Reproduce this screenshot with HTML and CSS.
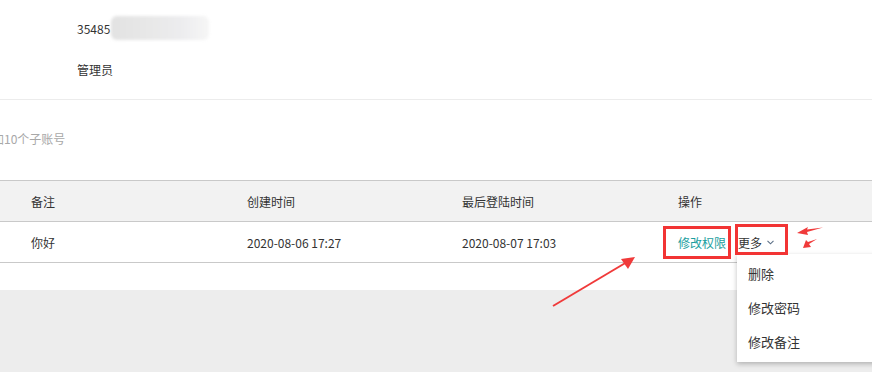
FILE: index.html
```html
<!DOCTYPE html>
<html lang="zh-CN">
<head>
    <meta charset="UTF-8">
    <meta name="viewport" content="width=device-width, initial-scale=1.0">
    <title>子账号管理</title>
    <link rel="stylesheet" href="styles.css">
</head>
<body>
    <div id="page">
        <div class="info">
            <div class="info-row">
                <span>35485</span>
                <span class="blur"></span>
            </div>
            <div class="info-row">管理员</div>
        </div>
        <div class="tip"><span>可添加10个子账号</span></div>
        <table class="sub-table">
            <thead>
                <tr>
                    <th>备注</th>
                    <th>创建时间</th>
                    <th>最后登陆时间</th>
                    <th>操作</th>
                </tr>
            </thead>
            <tbody>
                <tr>
                    <td>你好</td>
                    <td>2020-08-06 17:27</td>
                    <td>2020-08-07 17:03</td>
                    <td>
                        <div class="ops">
                            <a class="op-edit">修改权限</a>
                            <div class="more">
                                <a class="op-more">更多<svg class="caret" width="7" height="5" viewBox="0 0 7 5"><path d="M0.5 0.8 L3.5 3.8 L6.5 0.8" fill="none" stroke="#5b6f86" stroke-width="1.1"/></svg></a>
                                <ul class="menu">
                                    <li>删除</li>
                                    <li>修改密码</li>
                                    <li>修改备注</li>
                                </ul>
                            </div>
                        </div>
                    </td>
                </tr>
            </tbody>
        </table>
        <div class="gap"></div>
        <div class="footer-area"></div>

        <!-- annotations -->
        <div class="mark mark1"></div>
        <div class="mark mark2"></div>
        <svg class="arrows" width="872" height="372" viewBox="0 0 872 372">
            <line x1="553" y1="306" x2="627" y2="262" stroke="#f03a3a" stroke-width="2"/>
            <polygon points="635,257 621,259 628,269" fill="#f03a3a"/>
            <polygon points="797,233 808,227 807,229.5 823,227.5 807,232 808,235" fill="#f03a3a"/>
            <polygon points="803,248 806,240 808,242 817,239 809,244 811,247" fill="#f03a3a"/>
        </svg>
    </div>
</body>
</html>
```

FILE: styles.css
```css
body {
    margin: 0;
    font-family: "Noto Sans CJK SC", "Noto Sans", sans-serif;
    font-size: 12px;
    color: #333;
    background-color: #fff;
}
#page {
    position: relative;
    width: 872px;
    height: 372px;
    overflow: hidden;
}
.info {
    height: 100px;
    box-sizing: border-box;
    padding: 17px 0 0 77px;
    border-bottom: 1px solid #ececec;
}
.info-row {
    display: flex;
    align-items: center;
    height: 22px;
    margin-bottom: 19px;
}
.blur {
    width: 98px;
    height: 24px;
    margin-left: 1px;
    background: linear-gradient(90deg, #e2e2e2, #e8e8e8 40%, #ececee 70%, #f6f6f6);
    border-radius: 6px;
    filter: blur(1.5px);
}
.tip {
    height: 80px;
    line-height: 78px;
    color: #a8a8a8;
    white-space: nowrap;
}
.tip span {
    display: inline-block;
    margin-left: -32px;
}
.sub-table {
    width: 100%;
    border-collapse: collapse;
    table-layout: fixed;
}
.sub-table th,
.sub-table td {
    height: 40px;
    padding: 0 0 0 31px;
    text-align: left;
    font-weight: normal;
    border-top: 1px solid #c9c9c9;
    border-bottom: 1px solid #c9c9c9;
}
.sub-table th {
    background-color: #f2f2f2;
}
.sub-table th:nth-child(1), .sub-table td:nth-child(1) { width: 185px; }
.sub-table th:nth-child(2), .sub-table td:nth-child(2) { width: 184px; }
.sub-table th:nth-child(3), .sub-table td:nth-child(3) { width: 185px; }
.ops {
    display: flex;
    align-items: center;
}
.op-edit {
    color: #1a9e9e;
}
.more {
    position: relative;
    margin-left: 12px;
}
.op-more {
    display: flex;
    align-items: center;
    color: #333;
}
.caret {
    margin-left: 5px;
}
.menu {
    position: absolute;
    left: -1px;
    top: 20px;
    width: 150px;
    margin: 0;
    padding: 3px 0;
    list-style: none;
    background-color: #fff;
    box-shadow: 0 2px 5px rgba(0, 0, 0, 0.25);
    font-size: 13px;
    z-index: 2;
}
.menu li {
    height: 34px;
    line-height: 33px;
    padding-left: 11px;
}
.gap {
    height: 27px;
}
.footer-area {
    height: 90px;
    background-color: #ededed;
}
.mark {
    position: absolute;
    border: 3px solid #f23434;
    z-index: 3;
}
.mark1 {
    left: 663px;
    top: 226px;
    width: 62px;
    height: 27px;
}
.mark2 {
    left: 735px;
    top: 224px;
    width: 47px;
    height: 25px;
}
.arrows {
    position: absolute;
    left: 0;
    top: 0;
    z-index: 4;
}
```
